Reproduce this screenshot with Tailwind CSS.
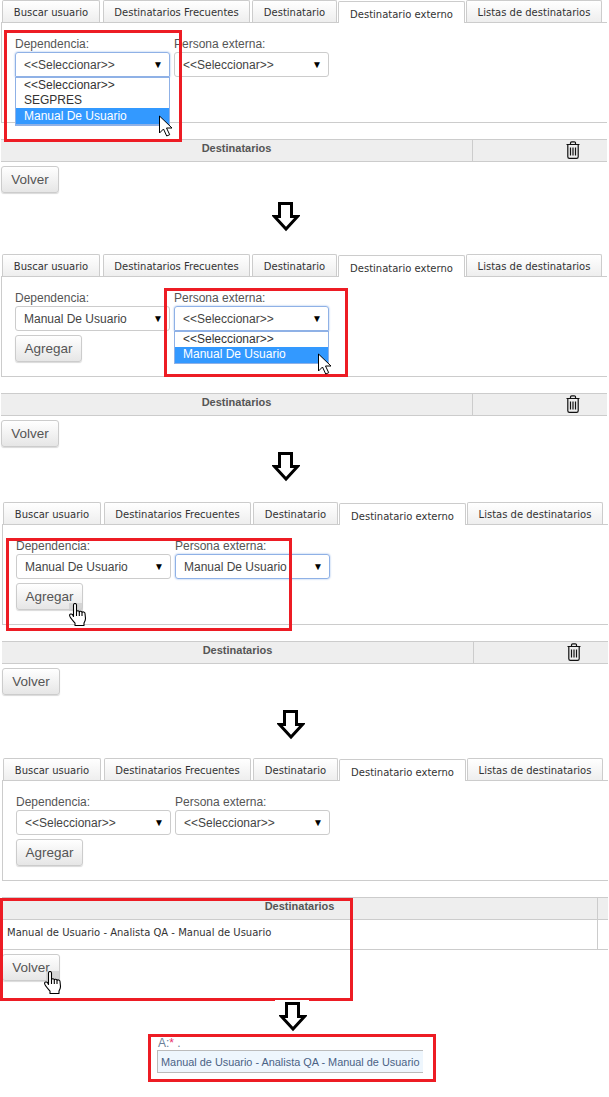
<!DOCTYPE html>
<html lang="es"><head><meta charset="utf-8"><title>Destinatario externo</title>
<script src="https://cdn.jsdelivr.net/npm/@tailwindcss/browser@4"></script></head>
<body class="bg-white">
<main class="relative w-[609px] h-[1097px] overflow-hidden bg-white font-['Liberation_Sans',sans-serif] text-[#555]">

<!-- Panel 1 -->
<section>
  <div class="flex items-end h-[22px] pl-[2px] font-['DejaVu_Sans',sans-serif] text-[10px] text-[#333]">
    <div class="w-[98px] h-[22px] mr-[3px] border border-b-0 border-[#ccc] rounded-t-[2px] bg-gradient-to-b from-white to-[#eee] text-center leading-[23px]">Buscar usuario</div>
    <div class="w-[147px] h-[22px] mr-[2px] border border-b-0 border-[#ccc] rounded-t-[2px] bg-gradient-to-b from-white to-[#eee] text-center leading-[23px]">Destinatarios Frecuentes</div>
    <div class="w-[85px] h-[22px] mr-[1px] border border-b-0 border-[#ccc] rounded-t-[2px] bg-gradient-to-b from-white to-[#eee] text-center leading-[23px]">Destinatario</div>
    <div class="w-[127px] h-[22px] mr-[1px] border border-b-0 border-[#ccc] rounded-t-[2px] bg-white text-center leading-[25px] relative z-10 -mb-px">Destinatario externo</div>
    <div class="w-[136px] h-[22px] border border-b-0 border-[#ccc] rounded-t-[2px] bg-gradient-to-b from-white to-[#eee] text-center leading-[23px]">Listas de destinatarios</div>
  </div>
  <div class="ml-px w-[606px] h-[101px] border border-r-0 border-[#ccc] pl-[13px] pt-[13px]">
    <div class="flex gap-[4px]">
      <div class="relative"><div class="text-[12px] leading-[16px]">Dependencia:</div>
        <div class="w-[155px] h-[25px] border border-[#8fb1e6] rounded-t-[3px] shadow-[0_0_2px_#8fb1e6] flex items-center justify-between pl-[8px] pr-[6px] text-[12px] text-[#444]"><span>&lt;&lt;Seleccionar&gt;&gt;</span><span class="text-black text-[10px]">▼</span></div>
        <div class="absolute left-0 top-[41px] w-[155px] border border-[#8fb1e6] border-b-[2px] text-[12px] leading-[15px] text-[#333] bg-white">
          <div class="pl-[8px]">&lt;&lt;Seleccionar&gt;&gt;</div><div class="pl-[8px]">SEGPRES</div><div class="pl-[8px] bg-[#3399ff] text-white h-[16px] leading-[16px]">Manual De Usuario</div>
        </div></div>
      <div><div class="text-[12px] leading-[16px]">Persona externa:</div>
        <div class="w-[155px] h-[25px] border border-[#ccc] rounded-[3px] flex items-center justify-between pl-[8px] pr-[6px] text-[12px] text-[#444]"><span>&lt;&lt;Seleccionar&gt;&gt;</span><span class="text-black text-[10px]">▼</span></div></div>
    </div>
  </div>
  <div class="ml-px mt-[16px] w-[606px] h-[23px] flex border-y border-[#ccc] bg-[#eee]">
    <div class="w-[472px] border-r border-[#ccc] text-center font-bold text-[11px] leading-[17px]">Destinatarios</div>
    <div class="flex-1 flex justify-end pr-[27px] pt-px"><svg class="w-[14px] h-[18px]" viewBox="0 0 14 18" fill="none" stroke="#111" stroke-width="1.2"><path d="M.5 3.500h13M4.500 3.500V2A1.200 1.200 0 0 1 5.700.8h2.600A1.200 1.200 0 0 1 9.500 2v1.500M1.800 3.500v12.300a1.600 1.600 0 0 0 1.600 1.600h7.200a1.600 1.600 0 0 0 1.600-1.600V3.500M4.500 6.500v8M7 6.500v8M9.500 6.500v8"/></svg></div>
  </div>
  <button class="block ml-px mt-[4px] pt-[2px] w-[58px] h-[27px] border border-[#ccc] rounded-[3px] bg-gradient-to-b from-white to-[#e6e6e6] shadow-[0_1px_1px_rgba(0,0,0,.15)] text-[13.5px] text-[#555]">Volver</button>
</section>
<div class="mt-[9px] h-[30px] ml-[272px]"><svg class="w-[28px] h-[30px]" viewBox="0 0 28 30" fill="#fff" stroke="#000" stroke-width="3"><path d="M7.500 1.500h12v13h6L14 27 2.500 14.500h5z"/></svg></div>

<!-- Panel 2 -->
<section class="mt-[22px]">
  <div class="flex items-end h-[22px] pl-[2px] font-['DejaVu_Sans',sans-serif] text-[10px] text-[#333]">
    <div class="w-[98px] h-[22px] mr-[3px] border border-b-0 border-[#ccc] rounded-t-[2px] bg-gradient-to-b from-white to-[#eee] text-center leading-[23px]">Buscar usuario</div>
    <div class="w-[147px] h-[22px] mr-[2px] border border-b-0 border-[#ccc] rounded-t-[2px] bg-gradient-to-b from-white to-[#eee] text-center leading-[23px]">Destinatarios Frecuentes</div>
    <div class="w-[85px] h-[22px] mr-[1px] border border-b-0 border-[#ccc] rounded-t-[2px] bg-gradient-to-b from-white to-[#eee] text-center leading-[23px]">Destinatario</div>
    <div class="w-[127px] h-[22px] mr-[1px] border border-b-0 border-[#ccc] rounded-t-[2px] bg-white text-center leading-[25px] relative z-10 -mb-px">Destinatario externo</div>
    <div class="w-[136px] h-[22px] border border-b-0 border-[#ccc] rounded-t-[2px] bg-gradient-to-b from-white to-[#eee] text-center leading-[23px]">Listas de destinatarios</div>
  </div>
  <div class="ml-px w-[606px] h-[101px] border border-r-0 border-[#ccc] pl-[13px] pt-[13px]">
    <div class="flex gap-[4px]">
      <div><div class="text-[12px] leading-[16px]">Dependencia:</div>
        <div class="w-[155px] h-[25px] border border-[#ccc] rounded-[3px] flex items-center justify-between pl-[8px] pr-[6px] text-[12px] text-[#444]"><span>Manual De Usuario</span><span class="text-black text-[10px]">▼</span></div>
      </div>
      <div class="relative"><div class="text-[12px] leading-[16px]">Persona externa:</div>
        <div class="w-[155px] h-[25px] border border-[#8fb1e6] rounded-t-[3px] shadow-[0_0_2px_#8fb1e6] flex items-center justify-between pl-[8px] pr-[6px] text-[12px] text-[#444]"><span>&lt;&lt;Seleccionar&gt;&gt;</span><span class="text-black text-[10px]">▼</span></div>
        <div class="absolute left-0 top-[41px] w-[155px] border border-[#8fb1e6] text-[12px] leading-[15px] text-[#333] bg-white">
          <div class="pl-[8px]">&lt;&lt;Seleccionar&gt;&gt;</div><div class="pl-[8px] bg-[#3399ff] text-white h-[16px] leading-[15px]">Manual De Usuario</div>
        </div></div>
    </div>
    <button class="block mt-[4px] pt-[2px] w-[67px] h-[27px] border border-[#ccc] rounded-[3px] bg-gradient-to-b from-white to-[#e6e6e6] shadow-[0_1px_1px_rgba(0,0,0,.15)] text-[13.5px] text-[#555]">Agregar</button>
  </div>
  <div class="ml-px mt-[16px] w-[606px] h-[23px] flex border-y border-[#ccc] bg-[#eee]">
    <div class="w-[472px] border-r border-[#ccc] text-center font-bold text-[11px] leading-[17px]">Destinatarios</div>
    <div class="flex-1 flex justify-end pr-[27px] pt-px"><svg class="w-[14px] h-[18px]" viewBox="0 0 14 18" fill="none" stroke="#111" stroke-width="1.2"><path d="M.5 3.500h13M4.500 3.500V2A1.200 1.200 0 0 1 5.700.8h2.600A1.200 1.200 0 0 1 9.500 2v1.500M1.800 3.500v12.300a1.600 1.600 0 0 0 1.600 1.600h7.200a1.600 1.600 0 0 0 1.600-1.600V3.500M4.500 6.500v8M7 6.500v8M9.500 6.500v8"/></svg></div>
  </div>
  <button class="block ml-px mt-[4px] pt-[2px] w-[58px] h-[27px] border border-[#ccc] rounded-[3px] bg-gradient-to-b from-white to-[#e6e6e6] shadow-[0_1px_1px_rgba(0,0,0,.15)] text-[13.5px] text-[#555]">Volver</button>
</section>
<div class="mt-[5px] h-[30px] ml-[272px]"><svg class="w-[28px] h-[30px]" viewBox="0 0 28 30" fill="#fff" stroke="#000" stroke-width="3"><path d="M7.500 1.500h12v13h6L14 27 2.500 14.500h5z"/></svg></div>

<!-- Panel 3 -->
<section class="mt-[20px] ml-px">
  <div class="flex items-end h-[22px] pl-[2px] font-['DejaVu_Sans',sans-serif] text-[10px] text-[#333]">
    <div class="w-[98px] h-[22px] mr-[3px] border border-b-0 border-[#ccc] rounded-t-[2px] bg-gradient-to-b from-white to-[#eee] text-center leading-[23px]">Buscar usuario</div>
    <div class="w-[147px] h-[22px] mr-[2px] border border-b-0 border-[#ccc] rounded-t-[2px] bg-gradient-to-b from-white to-[#eee] text-center leading-[23px]">Destinatarios Frecuentes</div>
    <div class="w-[85px] h-[22px] mr-[1px] border border-b-0 border-[#ccc] rounded-t-[2px] bg-gradient-to-b from-white to-[#eee] text-center leading-[23px]">Destinatario</div>
    <div class="w-[127px] h-[22px] mr-[1px] border border-b-0 border-[#ccc] rounded-t-[2px] bg-white text-center leading-[25px] relative z-10 -mb-px">Destinatario externo</div>
    <div class="w-[136px] h-[22px] border border-b-0 border-[#ccc] rounded-t-[2px] bg-gradient-to-b from-white to-[#eee] text-center leading-[23px]">Listas de destinatarios</div>
  </div>
  <div class="ml-px w-[606px] h-[101px] border border-r-0 border-[#ccc] pl-[13px] pt-[13px]">
    <div class="flex gap-[4px]">
      <div><div class="text-[12px] leading-[16px]">Dependencia:</div>
        <div class="w-[155px] h-[25px] border border-[#ccc] rounded-[3px] flex items-center justify-between pl-[8px] pr-[6px] text-[12px] text-[#444]"><span>Manual De Usuario</span><span class="text-black text-[10px]">▼</span></div>
      </div>
      <div><div class="text-[12px] leading-[16px]">Persona externa:</div>
        <div class="w-[155px] h-[25px] border border-[#8fb1e6] rounded-[3px] shadow-[0_0_2px_#8fb1e6] flex items-center justify-between pl-[8px] pr-[6px] text-[12px] text-[#444]"><span>Manual De Usuario</span><span class="text-black text-[10px]">▼</span></div>
      </div>
    </div>
    <button class="block mt-[4px] pt-[2px] w-[67px] h-[27px] border border-[#ccc] rounded-[3px] bg-gradient-to-b from-white to-[#e6e6e6] shadow-[0_1px_1px_rgba(0,0,0,.15)] text-[13.5px] text-[#555]">Agregar</button>
  </div>
  <div class="ml-px mt-[16px] w-[606px] h-[23px] flex border-y border-[#ccc] bg-[#eee]">
    <div class="w-[472px] border-r border-[#ccc] text-center font-bold text-[11px] leading-[17px]">Destinatarios</div>
    <div class="flex-1 flex justify-end pr-[27px] pt-px"><svg class="w-[14px] h-[18px]" viewBox="0 0 14 18" fill="none" stroke="#111" stroke-width="1.2"><path d="M.5 3.500h13M4.500 3.500V2A1.200 1.200 0 0 1 5.700.8h2.600A1.200 1.200 0 0 1 9.500 2v1.500M1.800 3.500v12.300a1.600 1.600 0 0 0 1.600 1.600h7.200a1.600 1.600 0 0 0 1.600-1.600V3.500M4.500 6.500v8M7 6.500v8M9.500 6.500v8"/></svg></div>
  </div>
  <button class="block ml-px mt-[4px] pt-[2px] w-[58px] h-[27px] border border-[#ccc] rounded-[3px] bg-gradient-to-b from-white to-[#e6e6e6] shadow-[0_1px_1px_rgba(0,0,0,.15)] text-[13.5px] text-[#555]">Volver</button>
</section>
<div class="mt-[15px] h-[30px] ml-[277px]"><svg class="w-[28px] h-[30px]" viewBox="0 0 28 30" fill="#fff" stroke="#000" stroke-width="3"><path d="M7.500 1.500h12v13h6L14 27 2.500 14.500h5z"/></svg></div>

<!-- Panel 4 -->
<section class="mt-[18px] ml-px">
  <div class="flex items-end h-[22px] pl-[2px] font-['DejaVu_Sans',sans-serif] text-[10px] text-[#333]">
    <div class="w-[98px] h-[22px] mr-[3px] border border-b-0 border-[#ccc] rounded-t-[2px] bg-gradient-to-b from-white to-[#eee] text-center leading-[23px]">Buscar usuario</div>
    <div class="w-[147px] h-[22px] mr-[2px] border border-b-0 border-[#ccc] rounded-t-[2px] bg-gradient-to-b from-white to-[#eee] text-center leading-[23px]">Destinatarios Frecuentes</div>
    <div class="w-[85px] h-[22px] mr-[1px] border border-b-0 border-[#ccc] rounded-t-[2px] bg-gradient-to-b from-white to-[#eee] text-center leading-[23px]">Destinatario</div>
    <div class="w-[127px] h-[22px] mr-[1px] border border-b-0 border-[#ccc] rounded-t-[2px] bg-white text-center leading-[25px] relative z-10 -mb-px">Destinatario externo</div>
    <div class="w-[136px] h-[22px] border border-b-0 border-[#ccc] rounded-t-[2px] bg-gradient-to-b from-white to-[#eee] text-center leading-[23px]">Listas de destinatarios</div>
  </div>
  <div class="ml-px w-[606px] h-[101px] border border-r-0 border-[#ccc] pl-[13px] pt-[13px]">
    <div class="flex gap-[4px]">
      <div><div class="text-[12px] leading-[16px]">Dependencia:</div>
        <div class="w-[155px] h-[25px] border border-[#ccc] rounded-[3px] flex items-center justify-between pl-[8px] pr-[6px] text-[12px] text-[#444]"><span>&lt;&lt;Seleccionar&gt;&gt;</span><span class="text-black text-[10px]">▼</span></div>
      </div>
      <div><div class="text-[12px] leading-[16px]">Persona externa:</div>
        <div class="w-[155px] h-[25px] border border-[#ccc] rounded-[3px] flex items-center justify-between pl-[8px] pr-[6px] text-[12px] text-[#444]"><span>&lt;&lt;Seleccionar&gt;&gt;</span><span class="text-black text-[10px]">▼</span></div>
      </div>
    </div>
    <button class="block mt-[4px] pt-[2px] w-[67px] h-[27px] border border-[#ccc] rounded-[3px] bg-gradient-to-b from-white to-[#e6e6e6] shadow-[0_1px_1px_rgba(0,0,0,.15)] text-[13.5px] text-[#555]">Agregar</button>
  </div>
  <div class="ml-px mt-[16px] w-[606px] border-y border-[#ccc]">
    <div class="flex h-[21px] bg-[#eee] border-b border-[#ccc] box-content">
      <div class="w-[596px] border-r border-[#ccc] text-center font-bold text-[11px] leading-[17px]">Destinatarios</div>
      <div class="flex-1"></div>
    </div>
    <div class="flex h-[29px]">
      <div class="w-[596px] border-r border-[#ccc] pl-[5px] font-['DejaVu_Sans',sans-serif] text-[10px] leading-[25px] text-[#333]">Manual de Usuario - Analista QA - Manual de Usuario</div>
    </div>
  </div>
  <button class="block ml-px mt-[4px] pt-[2px] w-[58px] h-[27px] border border-[#ccc] rounded-[3px] bg-gradient-to-b from-white to-[#e6e6e6] shadow-[0_1px_1px_rgba(0,0,0,.15)] text-[13.5px] text-[#555]">Volver</button>
</section>
<div class="mt-[21px] h-[30px] ml-[279px] relative z-20"><svg class="w-[28px] h-[30px]" viewBox="0 0 28 30" fill="#fff" stroke="#000" stroke-width="3"><path d="M7.500 1.500h12v13h6L14 27 2.500 14.500h5z"/></svg></div>

<!-- Final field -->
<div class="ml-[157px] mt-[3px] w-[266px] relative z-20">
  <div class="h-[15px] pl-px text-[12px] leading-[16px] text-[#6b7f99]">A:<span class="text-[#e8336d]">*</span> .</div>
  <div class="h-[23px] border border-r-0 border-[#bbb] bg-[#eef6fd] pl-[3px] text-[10.9px] leading-[22px] text-[#4a6285] whitespace-nowrap">Manual de Usuario - Analista QA - Manual de Usuario</div>
</div>

<!-- Hover shading under the cursors -->
<div class="absolute left-[69px] top-[603px] w-[14px] h-[8px] bg-[#ccc]/70"></div>
<div class="absolute left-[46px] top-[971px] w-[14px] h-[11px] bg-[#ccc]/70"></div>

<!-- Red callouts -->
<div class="absolute left-[4px] top-[30px] w-[178px] h-[112px] border-[3px] border-[#ed1c24]"></div>
<div class="absolute left-[164px] top-[288px] w-[184px] h-[89px] border-[3px] border-[#ed1c24]"></div>
<div class="absolute left-[6px] top-[538px] w-[286px] h-[93px] border-[3px] border-[#ed1c24]"></div>
<div class="absolute left-0 top-[898px] w-[353px] h-[103px] border-[3px] border-[#ed1c24]"></div>
<div class="absolute left-[275px] top-[1000px] w-[34px] h-[3px] bg-white"></div>
<div class="absolute left-[148px] top-[1034px] w-[288px] h-[48px] border-[3px] border-[#ed1c24]"></div>

<!-- Cursors -->
<svg class="absolute left-[158px] top-[115px] w-[15px] h-[22px]" viewBox="0 0 15 22" fill="#fff" stroke="#000" stroke-width="1"><path d="M1.500 1v17l4-4 3.200 7 3-1.300-3.200-6.700h5.500z"/></svg>
<svg class="absolute left-[317px] top-[353px] w-[15px] h-[22px]" viewBox="0 0 15 22" fill="#fff" stroke="#000" stroke-width="1"><path d="M1.500 1v17l4-4 3.200 7 3-1.300-3.200-6.700h5.500z"/></svg>
<svg class="absolute left-[69px] top-[603px] w-[19px] h-[23px]" viewBox="0 0 19 23" fill="#fff" stroke="#000" stroke-width="1.100" stroke-linejoin="round"><path d="M4.500 2a1.500 1.500 0 0 1 3 0v6.500c.4-1 2.600-1 2.800.4.4-1 2.500-.9 2.700.5.5-.8 3-.6 3 1.100l.5 5c0 2-1 3.500-1.500 4.500v2.500H6v-2.500C4.500 18 .9 15 .6 12.500c-.2-1.600 2-2 3-.8l.9 1.800z"/><path d="M7.500 8.500v4.500M10.300 9v4M13 9.500v3.500" fill="none"/></svg>
<svg class="absolute left-[44px] top-[971px] w-[19px] h-[23px]" viewBox="0 0 19 23" fill="#fff" stroke="#000" stroke-width="1.100" stroke-linejoin="round"><path d="M4.500 2a1.500 1.500 0 0 1 3 0v6.500c.4-1 2.600-1 2.800.4.4-1 2.500-.9 2.700.5.5-.8 3-.6 3 1.100l.5 5c0 2-1 3.500-1.500 4.500v2.500H6v-2.500C4.500 18 .9 15 .6 12.500c-.2-1.600 2-2 3-.8l.9 1.800z"/><path d="M7.500 8.500v4.500M10.300 9v4M13 9.500v3.500" fill="none"/></svg>

</main></body></html>
